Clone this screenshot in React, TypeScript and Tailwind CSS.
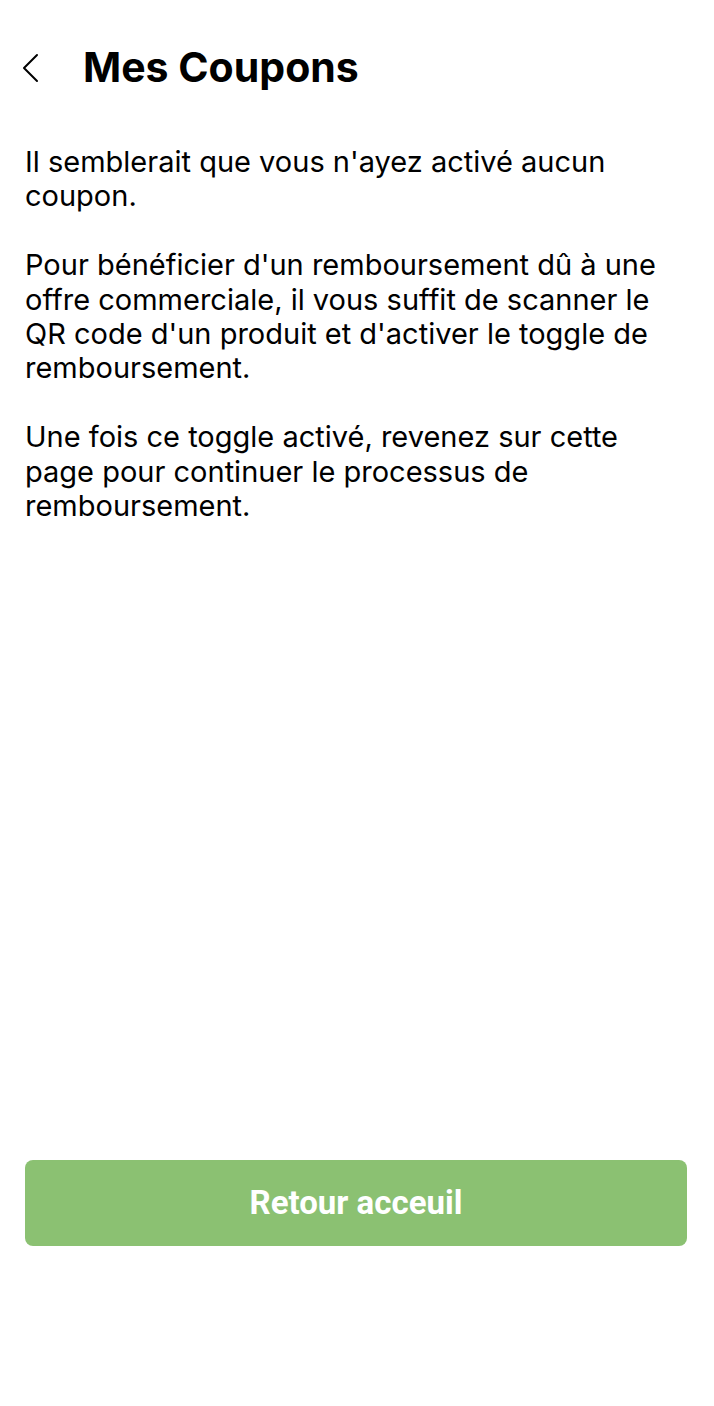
import React from "react";

export default function App() {
  return (
    <div className="flex min-h-[1406px] w-[714px] flex-col bg-white text-black" style={{ fontFamily: 'Inter, "Liberation Sans", Arial, sans-serif' }}>
      <header className="flex h-[145px] items-start pt-[44px]">
        <div className="flex h-[48px] items-center">
          <button className="ml-[18px] flex h-[48px] w-[24px] items-center justify-center">
            <svg width="22" height="32" viewBox="0 0 22 32" fill="none">
              <path d="M18 3 L5 16 L18 29" stroke="#000" strokeWidth="2" strokeLinecap="round" strokeLinejoin="round" />
            </svg>
          </button>
          <h1 className="ml-[41px] text-[41px] font-bold">Mes Coupons</h1>
        </div>
      </header>
      <div className="pl-[25px] pr-[27px] text-[29px] leading-[34.4px]">
        <p>Il semblerait que vous n'ayez activé aucun coupon.</p>
        <p className="mt-[34.4px]">Pour bénéficier d'un remboursement dû à une offre commerciale, il vous suffit de scanner le QR code d'un produit et d'activer le toggle de remboursement.</p>
        <p className="mt-[34.4px]">Une fois ce toggle activé, revenez sur cette page pour continuer le processus de remboursement.</p>
      </div>
      <div className="mt-auto pl-[25px] pr-[27px] pb-[160px]">
        <button className="flex h-[86px] w-full items-center justify-center rounded-[8px] bg-[#8bc172] text-[33px] font-bold text-white" style={{ fontFamily: 'Roboto, sans-serif' }}>
          Retour acceuil
        </button>
      </div>
    </div>
  );
}
